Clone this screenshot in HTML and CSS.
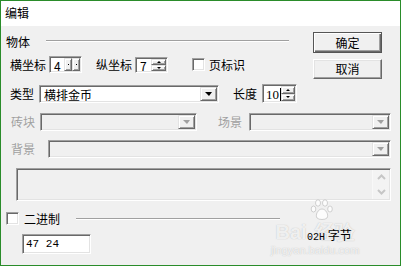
FILE: index.html
```html
<!DOCTYPE html>
<html lang="zh">
<head>
    <meta charset="UTF-8">
    <title>编辑</title>
    <link rel="stylesheet" href="styles.css">
</head>
<body>
    <div class="window">
        <div class="titlebar">编辑</div>

        <div class="client">
            <div class="top">
                <div class="top-left">
                    <div class="group-head">
                        <span>物体</span>
                        <span class="etch group-line"></span>
                    </div>
                    <div class="row row-pos">
                        <span>横坐标</span>
                        <div class="spin sunken spin-x">
                            <span class="spin-val">4</span>
                            <span class="spin-side">
                                <i class="raised"><b class="dot"></b></i>
                                <i class="raised"><b class="dot"></b></i>
                            </span>
                        </div>
                        <span class="ml-14">纵坐标</span>
                        <div class="spin sunken spin-y">
                            <span class="spin-val">7</span>
                            <span class="spin-stack">
                                <i class="raised"><b class="up"></b></i>
                                <i class="raised"><b class="down"></b></i>
                            </span>
                        </div>
                        <span class="check sunken ml-24"></span>
                        <span class="ml-4">页标识</span>
                    </div>
                </div>
                <div class="buttons">
                    <button class="btn btn-default">确定</button>
                    <button class="btn">取消</button>
                </div>
            </div>

            <div class="row row-type">
                <span>类型</span>
                <div class="combo sunken combo-type">
                    <span class="combo-text">横排金币</span>
                    <span class="combo-btn raised"><b class="tri"></b></span>
                </div>
                <span class="ml-14">长度</span>
                <div class="spin sunken spin-len">
                    <span class="spin-val num">10<em class="caret"></em></span>
                    <span class="spin-stack">
                        <i class="raised"><b class="up"></b></i>
                        <i class="raised"><b class="down"></b></i>
                    </span>
                </div>
            </div>

            <div class="row row-brick disabled">
                <span>砖块</span>
                <div class="combo sunken combo-brick">
                    <span class="combo-text"></span>
                    <span class="combo-btn raised"><b class="tri"></b></span>
                </div>
                <span class="ml-21">场景</span>
                <div class="combo sunken combo-scene">
                    <span class="combo-text"></span>
                    <span class="combo-btn raised"><b class="tri"></b></span>
                </div>
            </div>

            <div class="row row-bg disabled">
                <span>背景</span>
                <div class="combo sunken combo-bg">
                    <span class="combo-text"></span>
                    <span class="combo-btn raised"><b class="tri"></b></span>
                </div>
            </div>

            <div class="memo sunken">
                <div class="memo-scroll">
                    <svg width="9" height="6" viewBox="0 0 9 6"><polyline points="1,5 4.5,1.5 8,5" fill="none" stroke="#c6c6c6" stroke-width="2"/></svg>
                    <svg width="9" height="6" viewBox="0 0 9 6"><polyline points="1,1 4.5,4.5 8,1" fill="none" stroke="#c6c6c6" stroke-width="2"/></svg>
                </div>
            </div>

            <div class="row row-bin">
                <span class="check sunken"></span>
                <span class="ml-5">二进制</span>
                <span class="etch bin-line"></span>
            </div>

            <div class="row row-hex">
                <div class="edit sunken">47 24</div>
                <span class="size-text"><span class="num-small">02H</span> 字节</span>
            </div>
        </div>

        <!-- baidu watermark over the dialog -->
        <div class="watermark">
            <svg class="wm-paw" width="24" height="22" viewBox="0 0 24 22">
                <g fill="rgba(255,255,255,0.8)" stroke="rgba(160,160,160,0.45)" stroke-width="1">
                    <ellipse cx="8" cy="4" rx="2.5" ry="3.2"/>
                    <ellipse cx="15" cy="4" rx="2.5" ry="3.2"/>
                    <ellipse cx="3.5" cy="10" rx="2.3" ry="3"/>
                    <ellipse cx="20" cy="10" rx="2.3" ry="3"/>
                    <path d="M12 10 C8 10 5 16 7 19 C9 21 15 21 17 19 C19 16 16 10 12 10 Z"/>
                </g>
            </svg>
            <span class="wm-big">Bai<span class="wm-gap"></span>经验</span>
            <span class="wm-small">jingyan.baidu.com</span>
        </div>
    </div>
</body>
</html>
```

FILE: styles.css
```css
body {
    margin: 0;
    background-color: #fff;
}

.window {
    position: relative;
    width: 401px;
    height: 266px;
    box-sizing: border-box;
    border: 1px solid #2a8c2a;
    background-color: #f0f0f0;
    font-family: "Noto Sans CJK SC", "Liberation Sans", sans-serif;
    font-size: 12px;
    color: #000;
    overflow: hidden;
}

.titlebar {
    height: 25px;
    line-height: 24px;
    padding-left: 4px;
    background-color: #fff;
}

/* 3d borders, classic windows look */
.sunken {
    box-sizing: border-box;
    border: 1px solid;
    border-color: #a0a0a0 #fff #fff #a0a0a0;
    box-shadow: inset 1px 1px #696969, inset -1px -1px #e3e3e3;
}

.raised {
    box-sizing: border-box;
    border: 1px solid;
    border-color: #e3e3e3 #696969 #696969 #e3e3e3;
    box-shadow: inset 1px 1px #fff, inset -1px -1px #a0a0a0;
    background-color: #f0f0f0;
}

.etch {
    display: block;
    height: 0;
    border-top: 1px solid #a0a0a0;
    border-bottom: 1px solid #fff;
}

.row {
    display: flex;
    align-items: center;
    line-height: 14px;
}

.ml-4 { margin-left: 4px; }
.ml-5 { margin-left: 5px; }
.ml-14 { margin-left: 14px; }
.ml-21 { margin-left: 21px; }
.ml-24 { margin-left: 24px; }

/* top block */
.top {
    display: flex;
    height: 58px;
}

.top-left {
    width: 312px;
}

.group-head {
    display: flex;
    align-items: center;
    height: 18px;
    margin-top: 6px;
    padding-left: 5px;
}

.group-line {
    width: 243px;
    margin-left: 16px;
}

.row-pos {
    height: 17px;
    margin-top: 6px;
    padding-left: 9px;
}

.buttons {
    display: flex;
    flex-direction: column;
    gap: 6px;
    padding-top: 6px;
}

.btn {
    width: 69px;
    height: 20px;
    padding: 0;
    font: inherit;
    line-height: 16px;
    color: #000;
    background-color: #f0f0f0;
    border: 1px solid;
    border-color: #fff #696969 #696969 #fff;
    box-shadow: inset -1px -1px #a0a0a0, inset 1px 1px #e3e3e3;
}

.btn-default {
    height: 21px;
    border-color: #555;
    box-shadow: inset 1px 1px #fff, inset -1px -1px #696969, inset -2px -2px #a0a0a0;
}

/* spin boxes */
.spin {
    display: flex;
    margin-left: 3px;
    background-color: #fff;
}

.spin-val {
    flex: 1;
    padding: 1px 0 0 4px;
    line-height: 13px;
    display: flex;
    align-items: center;
}

.spin-x {
    width: 33px;
    height: 17px;
}

.spin-y {
    width: 33px;
    height: 16px;
}

.spin-side {
    display: flex;
    padding: 1px 1px 1px 0;
}

.spin-side i {
    display: flex;
    align-items: center;
    justify-content: center;
    width: 8px;
}

.dot {
    width: 1px;
    height: 1px;
    background-color: #000;
}

.spin-stack {
    display: flex;
    flex-direction: column;
    width: 15px;
    padding: 1px 1px 1px 0;
}

.spin-stack i {
    flex: 1;
    display: flex;
    align-items: center;
    justify-content: center;
}

.up, .down {
    width: 0;
    height: 0;
    border-left: 2px solid transparent;
    border-right: 2px solid transparent;
}

.up { border-bottom: 2px solid #000; }
.down { border-top: 2px solid #000; }

.spin-len {
    width: 35px;
    height: 19px;
    margin-left: 5px;
}

.num {
    font-family: "Liberation Serif", serif;
    font-size: 13px;
    padding-left: 3px;
}

.caret {
    display: inline-block;
    width: 1px;
    height: 13px;
    margin-left: 1px;
    background-color: #000;
}

/* combo boxes */
.combo {
    display: flex;
    height: 18px;
    margin-left: 5px;
}

.combo-text {
    flex: 1;
    padding: 2px 0 0 4px;
    line-height: 13px;
}

.combo-btn {
    display: flex;
    align-items: center;
    justify-content: center;
    width: 17px;
    margin: 1px 1px 1px 0;
}

.tri {
    width: 0;
    height: 0;
    border-left: 4px solid transparent;
    border-right: 3px solid transparent;
    border-top: 4px solid #000;
}

.row-type {
    height: 19px;
    padding-left: 9px;
}

.combo-type {
    width: 180px;
    background-color: #fff;
}

.disabled {
    color: #a0a0a0;
}

.disabled .tri {
    border-top-color: #a0a0a0;
}

.row-brick {
    height: 18px;
    margin-top: 10px;
    padding-left: 10px;
}

.combo-brick {
    width: 157px;
}

.combo-scene {
    width: 142px;
    margin-left: 7px;
}

.row-bg {
    height: 18px;
    margin-top: 9px;
    padding-left: 10px;
}

.combo-bg {
    width: 343px;
    margin-left: 13px;
}

/* multi line box */
.memo {
    display: flex;
    justify-content: flex-end;
    width: 375px;
    height: 33px;
    margin: 10px 0 0 15px;
}

.memo-scroll {
    display: flex;
    flex-direction: column;
    align-items: center;
    justify-content: space-around;
    width: 16px;
    margin: 1px 1px 1px 0;
    border-left: 1px solid #f8f8f8;
    background-color: #f3f3f3;
}

/* binary section */
.check {
    display: block;
    width: 13px;
    height: 13px;
    background-color: #fff;
}

.row-bin {
    height: 13px;
    margin-top: 11px;
    padding-left: 5px;
}

.bin-line {
    width: 204px;
    margin-left: 16px;
}

.row-hex {
    align-items: flex-start;
    margin-top: 4px;
}

.edit {
    width: 69px;
    height: 20px;
    margin: 5px 0 0 21px;
    padding: 3px 0 0 3px;
    font-family: "Liberation Mono", monospace;
    font-size: 11px;
    line-height: 13px;
    background-color: #fff;
}

.size-text {
    position: relative;
    z-index: 1;
    margin-left: 216px;
    line-height: 12px;
}

.num-small {
    font-family: "Liberation Mono", monospace;
    font-size: 10px;
}

.watermark {
    position: absolute;
    left: 254px;
    top: 198px;
    width: 120px;
    display: flex;
    flex-direction: column;
    align-items: center;
    color: rgba(255, 255, 255, 0.8);
    text-shadow: 0 0 1px rgba(140, 140, 140, 0.6);
    font-family: "Liberation Sans", sans-serif;
    pointer-events: none;
}

.wm-paw {
    margin-left: 14px;
}

.wm-big {
    display: flex;
    align-items: center;
    font-size: 20px;
    font-weight: bold;
    line-height: 22px;
}

.wm-gap {
    width: 8px;
}

.wm-small {
    font-size: 11px;
    line-height: 14px;
}
```
